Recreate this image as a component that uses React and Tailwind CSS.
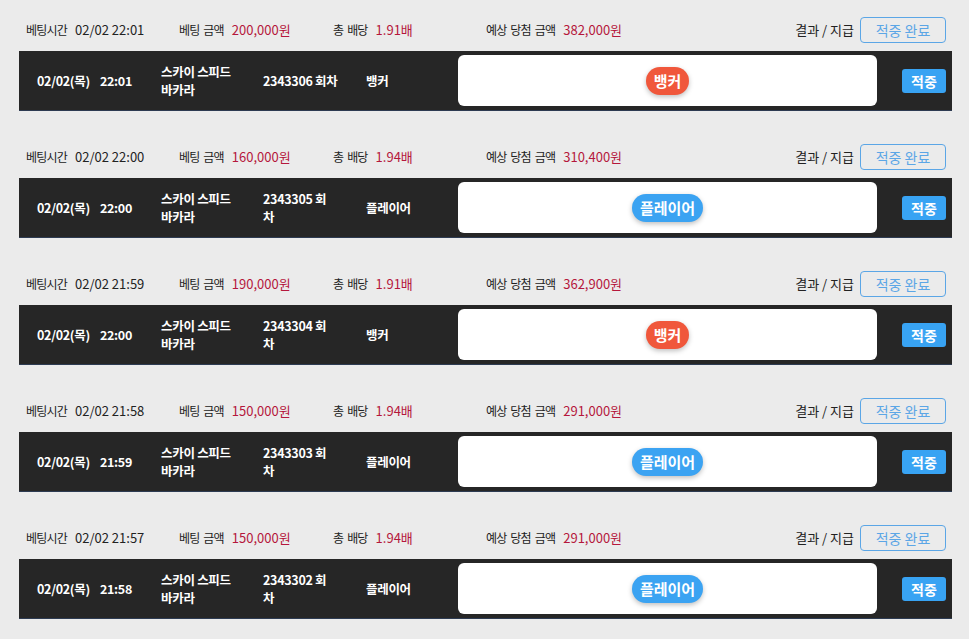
import React from 'react';

const bets = [
  { time: '02/02 22:01', amount: '200,000원', odds: '1.91배', win: '382,000원', date: '02/02(목)', clock: '22:01', round: ['2343306 회차'], pick: '뱅커' },
  { time: '02/02 22:00', amount: '160,000원', odds: '1.94배', win: '310,400원', date: '02/02(목)', clock: '22:00', round: ['2343305 회', '차'], pick: '플레이어' },
  { time: '02/02 21:59', amount: '190,000원', odds: '1.91배', win: '362,900원', date: '02/02(목)', clock: '22:00', round: ['2343304 회', '차'], pick: '뱅커' },
  { time: '02/02 21:58', amount: '150,000원', odds: '1.94배', win: '291,000원', date: '02/02(목)', clock: '21:59', round: ['2343303 회', '차'], pick: '플레이어' },
  { time: '02/02 21:57', amount: '150,000원', odds: '1.94배', win: '291,000원', date: '02/02(목)', clock: '21:58', round: ['2343302 회', '차'], pick: '플레이어' },
];

const Label = ({ children }) => (
  <span className="text-[12px] tracking-[-0.8px] [word-spacing:2px]">{children}</span>
);

const BetItem = ({ bet, first }) => {
  const isBanker = bet.pick === '뱅커';
  return (
    <div className={first ? '' : 'pt-4'}>
      {/* Summary line */}
      <div className="flex items-center pt-[17px] pb-2 pl-[7px] pr-[6px] text-[13px] text-[#222]">
        <div className="w-[153px] flex items-center gap-[8px]">
          <Label>베팅시간</Label>
          <span>{bet.time}</span>
        </div>
        <div className="w-[154px] flex items-center gap-[8px]">
          <Label>베팅 금액</Label>
          <span className="text-[#b5173c]">{bet.amount}</span>
        </div>
        <div className="w-[153px] flex items-center gap-[8px]">
          <Label>총 배당</Label>
          <span className="text-[#b5173c]">{bet.odds}</span>
        </div>
        <div className="flex items-center gap-[8px]">
          <Label>예상 당첨 금액</Label>
          <span className="text-[#b5173c]">{bet.win}</span>
        </div>
        <div className="ml-auto flex items-center gap-[6px]">
          <span>결과 / 지급</span>
          <button className="w-[86px] h-[26px] rounded-[4px] border border-[#5ba6e6] text-[#5ba6e6] text-[14px]">
            적중 완료
          </button>
        </div>
      </div>

      {/* Detail row */}
      <div className="flex items-center h-[60px] py-1 pl-[18px] pr-[6px] bg-[#262626] border-b border-[#2d3b52] text-white text-[12.5px] tracking-[-0.3px] font-bold leading-[18px]">
        <div className="w-[124px] flex gap-[10px]">
          <span>{bet.date}</span>
          <span>{bet.clock}</span>
        </div>
        <div className="w-[102px]">
          <div>스카이 스피드</div>
          <div>바카라</div>
        </div>
        <div className="w-[103px]">
          {bet.round.map((line) => (
            <div key={line}>{line}</div>
          ))}
        </div>
        <div className="w-[92px]">{bet.pick}</div>
        <div className="w-[419px] h-[51px] bg-white rounded-[6px] flex items-center justify-center">
          <span
            className={`h-[28px] px-[8px] rounded-full flex items-center text-[15px] tracking-normal font-bold text-white shadow-[0_2px_5px_rgba(0,0,0,0.25)] ${
              isBanker ? 'bg-[#f0573b]' : 'bg-[#3ba3f2]'
            }`}
          >
            {bet.pick}
          </span>
        </div>
        <button className="ml-auto w-[44px] h-[24px] rounded-[3px] bg-[#38a3f3] text-white text-[14px] tracking-normal font-bold">
          적중
        </button>
      </div>
    </div>
  );
};

export default function App() {
  return (
    <div
      className="min-h-[639px] bg-[#ebebeb] pl-[19px] pb-4"
      style={{ fontFamily: '"Noto Sans CJK KR", "Noto Sans", sans-serif' }}
    >
      <div className="w-[933px]">
        {bets.map((bet, i) => (
          <BetItem key={i} bet={bet} first={i === 0} />
        ))}
      </div>
    </div>
  );
}
